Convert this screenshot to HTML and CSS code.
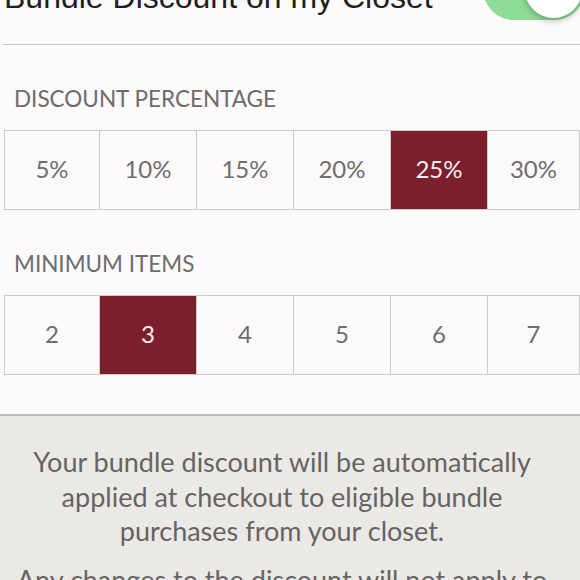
FILE: index.html
```html
<!DOCTYPE html>
<html lang="en">

<head>
  <meta charset="UTF-8" />
  <meta name="viewport" content="width=device-width, initial-scale=1.0" />
  <title>Bundle Discount</title>
  <link rel="stylesheet" href="styles.css">
</head>

<body>
  <div class="pagina">
    <div class="cabecalho">
      <div class="titulo">Bundle Discount on my Closet</div>
      <div class="chave"><span class="bolinha"></span></div>
    </div>

    <div class="secao">
      <div class="rotulo">DISCOUNT PERCENTAGE</div>
      <div class="opcoes">
        <div class="opcao">5%</div>
        <div class="opcao">10%</div>
        <div class="opcao">15%</div>
        <div class="opcao">20%</div>
        <div class="opcao ativa">25%</div>
        <div class="opcao">30%</div>
      </div>

      <div class="rotulo">MINIMUM ITEMS</div>
      <div class="opcoes">
        <div class="opcao">2</div>
        <div class="opcao ativa">3</div>
        <div class="opcao">4</div>
        <div class="opcao">5</div>
        <div class="opcao">6</div>
        <div class="opcao">7</div>
      </div>
    </div>

    <div class="rodape">
      <p>Your bundle discount will be automatically applied at checkout to eligible bundle purchases from your closet.</p>
      <p>Any changes to the discount will not apply to bundles that have already been created.</p>
    </div>
  </div>
</body>

</html>
```

FILE: styles.css
```css
body,
html {
  margin: 0;
  padding: 0;
  height: 100%;
  background-color: #fcfafb;
  overflow: hidden;
}

.pagina {
  margin-top: -42px;
}

.cabecalho {
  display: flex;
  align-items: center;
  justify-content: space-between;
  margin-left: 3px;
  margin-right: -5px;
  padding-bottom: 24px;
  border-bottom: 1px solid #c6c4c4;
}

.titulo {
  font-family: 'Liberation Sans', Arial, sans-serif;
  font-size: 32px;
  color: #1e1e1e;
  padding: 17px 0 0 1px;
  white-space: nowrap;
}

.chave {
  flex-shrink: 0;
  width: 102px;
  height: 62px;
  border-radius: 31px;
  background-color: #8fdc97;
  display: flex;
  align-items: center;
  justify-content: flex-end;
  padding: 0 3px;
  box-sizing: border-box;
}

.bolinha {
  width: 57px;
  height: 57px;
  border-radius: 50%;
  background-color: #fff;
  box-shadow: 0 3px 6px rgba(0, 0, 0, 0.25);
}

.secao {
  padding: 0 0 39px 4px;
}

.rotulo {
  font-family: Lato, sans-serif;
  font-size: 22.5px;
  color: #6d6b6b;
  padding: 40px 0 18px 10px;
}

.opcoes {
  display: grid;
  grid-template-columns: 95px repeat(4, 97px) 1fr;
  height: 80px;
  border: 1px solid #cdcaca;
  box-sizing: border-box;
}

.opcao {
  display: flex;
  align-items: center;
  justify-content: center;
  padding-bottom: 4px;
  font-family: Lato, sans-serif;
  font-size: 24px;
  color: #6f6d6d;
  border-right: 1px solid #cdcaca;
}

.opcao:last-child {
  border-right: none;
}

.opcao.ativa {
  background-color: #7c1f2d;
  color: #f6eef0;
}

.rodape {
  background-color: #ebe9e5;
  border-top: 2px solid #bdbbbb;
  padding: 29px 28px 0 12px;
  text-align: center;
  font-family: Lato, sans-serif;
  font-size: 27px;
  line-height: 34.5px;
  color: #666462;
  height: 300px;
}

.rodape p {
  margin: 0 0 14px;
}
```
